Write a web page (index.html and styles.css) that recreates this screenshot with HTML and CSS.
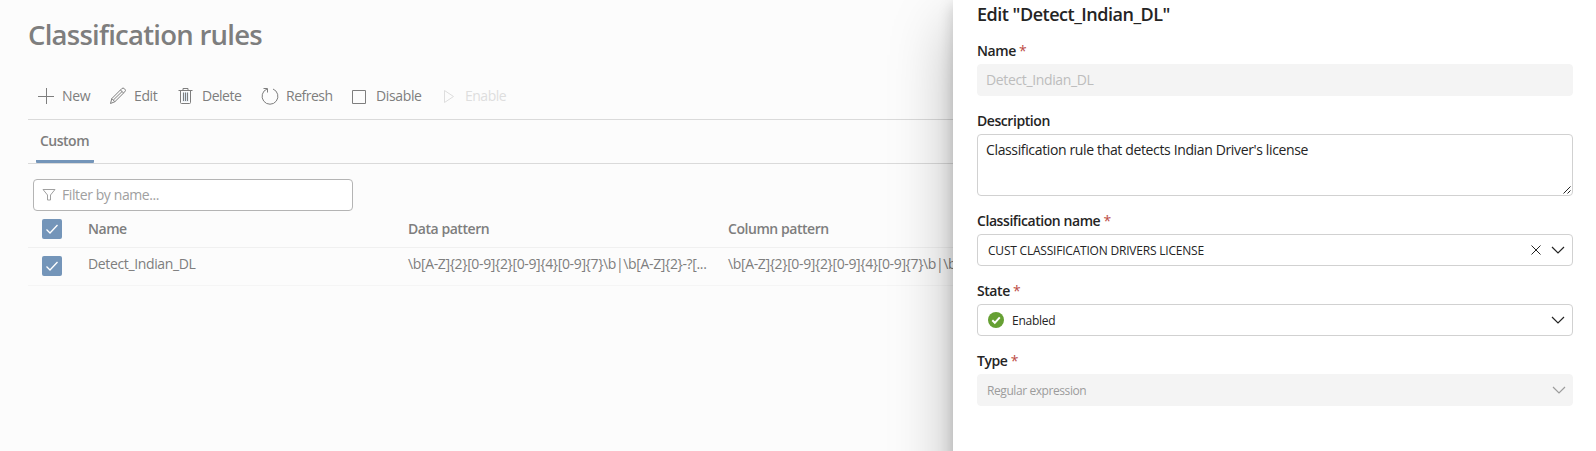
FILE: index.html
```html
<!DOCTYPE html>
<html lang="en">
<head>
<meta charset="utf-8">
<title>Classification rules</title>
<link rel="stylesheet" href="styles.css">
</head>
<body>
<div class="app">
  <main class="page">
    <h1 class="page-title"><span>Classification rules</span></h1>
    <div class="toolbar">
      <button class="tool tool-new"><svg width="18" height="18" viewBox="0 0 18 18"><path d="M9.500 1v16M1 9.500h16"/></svg><span>New</span></button>
      <button class="tool tool-edit"><svg width="18" height="18" viewBox="0 0 18 18"><path d="M1.500 16.500l1.300-4.900L12.700 1.700a1.900 1.900 0 0 1 2.700 0l.4.4a1.900 1.900 0 0 1 0 2.700L5.900 14.700zM2.800 11.600l3.100 3.100M11.500 3l3.100 3.100M4.300 13.100l8.800-8.600"/></svg><span>Edit</span></button>
      <button class="tool tool-delete"><svg width="18" height="18" viewBox="0 0 18 18"><path class="bin" d="M5.500 5.500h6v9h-6z"/><path d="M1.500 3.500h14M6 3.500v-2h5v2M3.500 3.500v12q0 1 1 1h8q1 0 1-1v-12M6.500 5.500v8.500M8.500 5.500v8.500M10.500 5.500v8.500"/></svg><span>Delete</span></button>
      <button class="tool tool-refresh"><svg width="18" height="18" viewBox="0 0 18 18"><path d="M6 2a7.900 7.900 0 1 0 6 0M2.500 1.500H6.500v4"/></svg><span>Refresh</span></button>
      <button class="tool tool-disable"><svg width="18" height="18" viewBox="0 0 18 18"><path d="M1.500 3.500h13v13h-13z"/></svg><span>Disable</span></button>
      <button class="tool tool-enable" disabled><svg width="18" height="18" viewBox="0 0 18 18"><path d="M4.500 3.500v12l9-6z"/></svg><span>Enable</span></button>
    </div>
    <nav class="tabs"><a class="tab"><span>Custom</span></a></nav>
    <div class="filter">
      <svg width="14" height="14" viewBox="0 0 14 14"><path d="M1 1.500h12L8.500 7v5h-3V7z"/></svg>
      <span>Filter by name...</span>
    </div>
    <div class="grid">
      <div class="row head">
        <span class="check"><svg width="20" height="20" viewBox="0 0 20 20"><path d="M4.500 10.500l3.500 3.500 7.500-8"/></svg></span>
        <span class="cell">Name</span><span class="cell">Data pattern</span><span class="cell">Column pattern</span>
      </div>
      <div class="row item">
        <span class="check"><svg width="20" height="20" viewBox="0 0 20 20"><path d="M4.500 10.500l3.500 3.500 7.500-8"/></svg></span>
        <span class="cell">Detect_Indian_DL</span><span class="cell">\b[A-Z]{2}[0-9]{2}[0-9]{4}[0-9]{7}\b|\b[A-Z]{2}-?[...</span><span class="cell">\b[A-Z]{2}[0-9]{2}[0-9]{4}[0-9]{7}\b|\b</span>
      </div>
    </div>
  </main>
  <aside class="panel">
    <h2 class="panel-title"><span>Edit "Detect_Indian_DL"</span></h2>
    <div class="field">
      <label class="label">Name <i>*</i></label>
      <div class="box off"><span class="body">Detect_Indian_DL</span></div>
    </div>
    <div class="field">
      <label class="label">Description</label>
      <div class="box area"><span class="body">Classification rule that detects Indian Driver's license</span>
        <svg class="grip" width="8" height="8" viewBox="0 0 8 8"><path d="M.5 7.500l7-7M4.500 7.500l3-3"/></svg></div>
    </div>
    <div class="field">
      <label class="label">Classification name <i>*</i></label>
      <div class="box"><span class="small caps">CUST CLASSIFICATION DRIVERS LICENSE</span>
        <svg class="clear" width="12" height="12" viewBox="0 0 12 12"><path d="M1.500 1.500l9 9M10.500 1.500l-9 9"/></svg>
        <svg class="chevron" width="14" height="8" viewBox="0 0 14 8"><path d="M1 1l6 6 6-6"/></svg></div>
    </div>
    <div class="field">
      <label class="label">State <i>*</i></label>
      <div class="box"><svg class="ok" width="16" height="16" viewBox="0 0 16 16"><circle cx="8" cy="8" r="8"/><path d="M4.300 8.300l2.500 2.500 5-5.500"/></svg><span class="small">Enabled</span>
        <svg class="chevron" width="14" height="8" viewBox="0 0 14 8"><path d="M1 1l6 6 6-6"/></svg></div>
    </div>
    <div class="field">
      <label class="label">Type <i>*</i></label>
      <div class="box off muted"><span class="small type">Regular expression</span>
        <svg class="chevron" width="14" height="8" viewBox="0 0 14 8"><path d="M1 1l6 6 6-6"/></svg></div>
    </div>
  </aside>
</div>
</body>
</html>
```
FILE: styles.css
```css
* { box-sizing: border-box; }
body {
  margin: 0;
  background: #fcfcfc;
  color: #7e7e7e;
  font: 14px/20px "Open Sans", "Noto Sans", sans-serif;
  letter-spacing: -.36px;
  overflow: hidden;
}
svg { display: block; flex: none; fill: none; stroke: currentColor; }
span, label { white-space: nowrap; }
.app { display: flex; width: 1596px; height: 451px; overflow: hidden; }
.page { flex: none; width: 953px; padding-left: 28px; }
.page-title { margin: 0; height: 72px; padding-top: 17px; font-size: 27.5px; line-height: 36px; font-weight: 600; letter-spacing: -.75px; }

.toolbar { display: flex; height: 48px; align-items: center; border-bottom: 1px solid #dadada; padding-left: 9px; }
.tool { display: flex; align-items: center; gap: 7px; padding: 0; border: 0; background: none; color: inherit; font: inherit; letter-spacing: inherit; flex: none; }
.tool-new { width: 72px; }
.tool-edit { width: 68px; }
.tool-delete { width: 84px; letter-spacing: -.5px; }
.tool-refresh { width: 90px; letter-spacing: -.5px; }
.tool-disable { width: 89px; }
.tool-enable { color: #dedede; letter-spacing: -.5px; }
.tool .bin { fill: #dce8f2; stroke: none; }

.tabs { height: 44px; border-bottom: 1px solid #dadada; padding-left: 8px; }
.tab { display: block; width: 58px; height: 43px; padding: 11px 0 0 4px; border-bottom: 3px solid #7495b9; border-radius: 1px; font-weight: 600; letter-spacing: -.5px; }

.filter { display: flex; align-items: center; gap: 6px; width: 320px; height: 32px; margin: 15px 0 0 5px; padding-left: 8px; border: 1px solid #b4b4b4; border-radius: 4px; background: #fff; color: #a0a0a0; letter-spacing: -.4px; }

.row { display: grid; grid-template-columns: 60px 320px 320px 225px; border-bottom: 1px solid #f0f0f0; }
.head { height: 37px; padding-top: 8px; font-weight: 600; letter-spacing: -.45px; }
.item { height: 38px; padding-top: 8px; border-color: #f5f5f5; }
.check { width: 20px; height: 20px; margin-left: 14px; border-radius: 2px; background: #7495b9; color: #fff; }
.check svg { stroke-width: 1.3; }
.cell { height: 20px; }
.item .cell { margin-top: -2px; }

.panel { flex: none; width: 643px; height: 640px; padding: 0 23px 0 24px; background: #fff; color: #242424; box-shadow: 0 26px 58px rgba(0, 0, 0, .28), 0 5px 14px rgba(0, 0, 0, .18); position: relative; }
.panel-title { margin: 0; height: 41px; padding-top: 2px; font-size: 18px; line-height: 24px; font-weight: 600; letter-spacing: -.49px; }
.field { margin-bottom: 15px; }
.label { display: block; height: 23px; line-height: 20px; font-weight: 600; letter-spacing: -.43px; }
.label i { color: #bc4b45; font-style: normal; font-weight: 400; }
.box { display: flex; align-items: center; height: 32px; padding: 0 7px 0 10px; border: 1px solid #d1d1d1; border-radius: 4px; position: relative; }
.off { border-color: #f4f4f4; background: #f4f4f4; color: #bdbdbd; }
.muted { padding: 0 6px 0 9px; color: #9c9c9c; }
.body { margin-left: -2px; }
.muted .small { margin-left: 0; }
.area { height: 62px; align-items: flex-start; padding-top: 5px; }
.grip { position: absolute; right: 1px; bottom: 1px; }
.small { padding-top: 2px; font-size: 12px; letter-spacing: -.25px; }
.caps { letter-spacing: -.21px; }
.type { letter-spacing: -.42px; }
.ok { margin-right: 8px; stroke: #fff; stroke-width: 2; }
.ok circle { fill: #66a033; stroke: none; }
.clear { margin-left: auto; }
.chevron { margin-left: auto; stroke-width: 1.2; }
.clear + .chevron { margin-left: 9px; }
```
